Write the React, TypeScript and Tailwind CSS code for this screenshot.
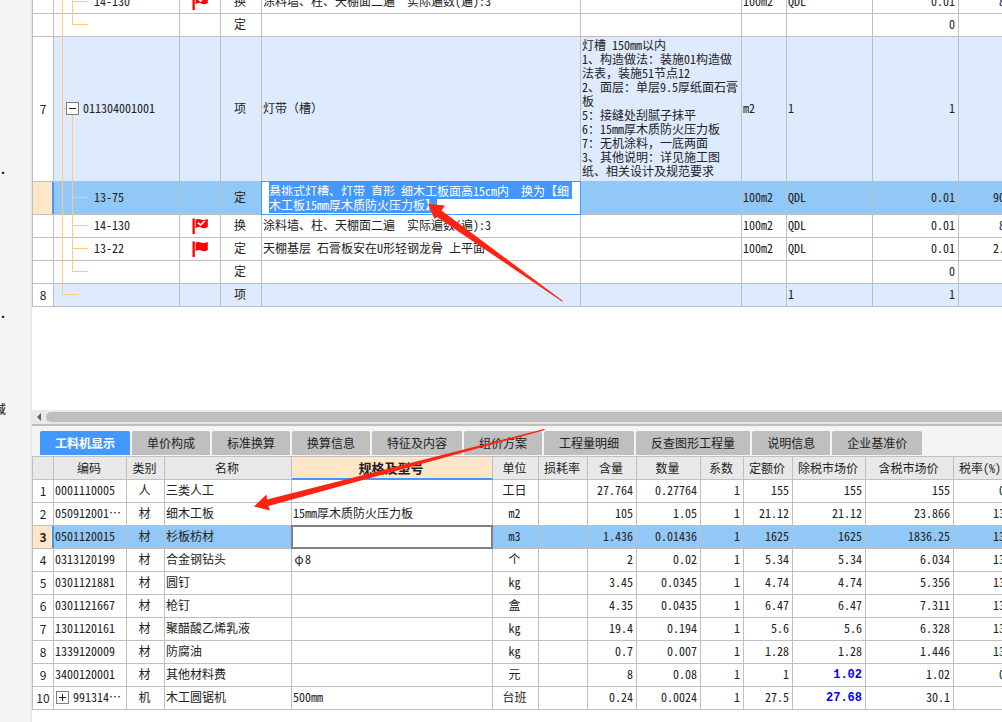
import { useEffect, useRef, type ReactNode } from 'react';

type Guide = 'branch' | 'last' | 'parent' | 'rootEnd';

interface Item {
  no?: string;
  code?: string;
  guide: Guide;
  flag?: 'check' | 'plain';
  kind: string;
  name?: string;
  feature?: string[];
  unit?: string;
  formula?: string;
  qty?: string;
  price?: string;
  group?: boolean;
  active?: boolean;
}

const items: Item[] = [
  { code: '14-130', guide: 'branch', flag: 'check', kind: '换', name: '涂料墙、柱、天棚面二遍  实际遍数(遍):3', unit: '100m2', formula: 'QDL', qty: '0.01', price: '8' },
  { guide: 'last', kind: '定', qty: '0' },
  {
    no: '7', code: '011304001001', guide: 'parent', kind: '项', name: '灯带（槽）', group: true,
    feature: [
      '灯槽 150mm以内', '1、构造做法：装施01构造做', '法表，装施51节点12', '2、面层：单层9.5厚纸面石膏', '板',
      '5：接缝处刮腻子抹平', '6：15mm厚木质防火压力板', '7：无机涂料，一底两面', '3、其他说明：详见施工图', '纸、相关设计及规范要求',
    ],
    unit: 'm2', formula: '1', qty: '1',
  },
  { code: '13-75', guide: 'branch', kind: '定', name: '悬挑式灯槽、灯带 直形 细木工板面高15cm内  换为【细木工板15mm厚木质防火压力板】', unit: '100m2', formula: 'QDL', qty: '0.01', price: '90', active: true },
  { code: '14-130', guide: 'branch', flag: 'check', kind: '换', name: '涂料墙、柱、天棚面二遍  实际遍数(遍):3', unit: '100m2', formula: 'QDL', qty: '0.01', price: '8' },
  { code: '13-22', guide: 'branch', flag: 'plain', kind: '定', name: '天棚基层 石膏板安在U形轻钢龙骨 上平面', unit: '100m2', formula: 'QDL', qty: '0.01', price: '2.' },
  { guide: 'last', kind: '定', qty: '0' },
  { no: '8', guide: 'rootEnd', kind: '项', formula: '1', qty: '1', group: true },
];

const tabs = ['工料机显示', '单价构成', '标准换算', '换算信息', '特征及内容', '组价方案', '工程量明细', '反查图形工程量', '说明信息', '企业基准价'];

const headers = ['', '编码', '类别', '名称', '规格及型号', '单位', '损耗率', '含量', '数量', '系数', '定额价', '除税市场价', '含税市场价', '税率(%)'];

const materials: string[][] = [
  ['0001110005', '人', '三类人工', '', '工日', '', '27.764', '0.27764', '1', '155', '155', '155', '0'],
  ['050912001⋯', '材', '细木工板', '15mm厚木质防火压力板', 'm2', '', '105', '1.05', '1', '21.12', '21.12', '23.866', '13'],
  ['0501120015', '材', '杉板枋材', '', 'm3', '', '1.436', '0.01436', '1', '1625', '1625', '1836.25', '13'],
  ['0313120199', '材', '合金钢钻头', 'φ8', '个', '', '2', '0.02', '1', '5.34', '5.34', '6.034', '13'],
  ['0301121881', '材', '圆钉', '', 'kg', '', '3.45', '0.0345', '1', '4.74', '4.74', '5.356', '13'],
  ['0301121667', '材', '枪钉', '', '盒', '', '4.35', '0.0435', '1', '6.47', '6.47', '7.311', '13'],
  ['1301120161', '材', '聚醋酸乙烯乳液', '', 'kg', '', '19.4', '0.194', '1', '5.6', '5.6', '6.328', '13'],
  ['1339120009', '材', '防腐油', '', 'kg', '', '0.7', '0.007', '1', '1.28', '1.28', '1.446', '13'],
  ['3400120001', '材', '其他材料费', '', '元', '', '8', '0.08', '1', '1', '1.02', '1.02', '0'],
  ['991314⋯', '机', '木工圆锯机', '500mm', '台班', '', '0.24', '0.0024', '1', '27.5', '27.68', '30.1', ''],
];

const LINE = 'absolute bg-[#ffc97f]';

/* Latin glyphs are half-width; Chinese punctuation and φ keep a full cell. */
function Label({ text = '' }: { text?: string }) {
  return (
    <>
      {text.split(/([，（）φ])/).map((part, i) => {
        if (i % 2 === 0) return part;
        return (
          <span key={i} className="inline-block w-3 text-center [font-feature-settings:normal]">
            {part}
          </span>
        );
      })}
    </>
  );
}

function TreeGuide({ guide }: { guide: Guide }) {
  if (guide === 'rootEnd') {
    return (
      <>
        <span className={`${LINE} left-2 top-0 h-[calc(50%-1px)] w-px`} />
        <span className={`${LINE} left-2 top-[calc(50%-1px)] h-px w-4`} />
      </>
    );
  }
  return (
    <>
      <span className={`${LINE} left-2 top-0 -bottom-px w-px`} />
      {guide === 'parent' && (
        <>
          <span className={`${LINE} left-2 top-[calc(50%-1px)] h-px w-1`} />
          <span className={`${LINE} left-[18px] top-1/2 -bottom-px w-px`} />
        </>
      )}
      {guide === 'branch' && <span className={`${LINE} left-[18px] top-0 -bottom-px w-px`} />}
      {guide === 'last' && <span className={`${LINE} left-[18px] top-0 h-[calc(50%-1px)] w-px`} />}
      {guide !== 'parent' && <span className={`${LINE} left-[18px] top-[calc(50%-1px)] h-px w-4`} />}
    </>
  );
}

function Toggle({ open, label }: { open: boolean; label: string }) {
  return (
    <button aria-label={label} className="relative flex size-[13px] shrink-0 items-center justify-center border border-[#808080] bg-white">
      <svg viewBox="0 0 7 7" className="size-[7px]" shapeRendering="crispEdges">
        <path d={open ? 'M0 3h7v1H0z' : 'M0 3h7v1H0zM3 0h1v7H3z'} fill="#222" />
      </svg>
    </button>
  );
}

function Flag({ check }: { check: boolean }) {
  return (
    <svg viewBox="0 0 16 16" className="mx-auto size-4">
      <path d="M0 .500h3V16H0z" fill="#ff8080" />
      <path d="M1 .500h1.600V16H1z" fill="#f00" />
      <path d="M3.600 1.500C5.500 .6 7.500 .8 9 1.500S13 2 15.800 1V9C13 10.600 11 10.400 9 9.600S5.500 9 3.600 10.200z" fill="#f00" />
      {check && <path d="M5.800 4.600 8.500 7 12.800 2.800" fill="none" stroke="#fff" strokeWidth="1.700" />}
    </svg>
  );
}

function NameEditor({ value }: { value: string }) {
  const ref = useRef<HTMLTextAreaElement>(null);
  useEffect(() => {
    ref.current?.focus({ preventScroll: true });
    ref.current?.select();
  }, []);
  return (
    <textarea
      ref={ref}
      aria-label="名称"
      defaultValue={value}
      spellCheck={false}
      className="absolute -inset-y-px -left-px -right-px block resize-none overflow-hidden border border-[#4398ff] bg-white pt-0.5 pr-0.5 pl-[7px] leading-[14px] outline-none selection:bg-[#4398ff] selection:text-white"
    />
  );
}

function Cell({ children, className = '' }: { children?: ReactNode; className?: string }) {
  return (
    <td className={`overflow-hidden border-r border-b border-[#bfbfbf] pt-0 pr-[3px] pb-0.5 pl-px whitespace-pre ${className}`}>{children}</td>
  );
}

function RowNumber({ children, active }: { children?: ReactNode; active?: boolean }) {
  return (
    <th
      scope="row"
      className={`relative border-r border-b border-[#bfbfbf] p-0 text-center [font-feature-settings:normal] ${active ? 'bg-[#ffe6c8] font-bold' : 'bg-white font-normal'}`}
    >
      {children}
      {active && <span className="absolute inset-y-0 -right-px w-0.5 bg-[#4398ff]" />}
    </th>
  );
}

function ItemTable() {
  return (
    <table className="-mt-[9px] w-full min-w-[977px] table-fixed border-separate border-spacing-0 border-l border-[#bfbfbf]">
      <colgroup>
        <col className="w-[21px]" />
        <col className="w-[126px]" />
        <col className="w-[41px]" />
        <col className="w-[41px]" />
        <col className="w-[319px]" />
        <col className="w-[161px]" />
        <col className="w-[45px]" />
        <col className="w-[86px]" />
        <col className="w-[86px]" />
        <col className="w-[50px]" />
      </colgroup>
      <tbody>
        {items.map((item, i) => (
          <tr
            key={i}
            className={`${item.feature ? 'h-[145px]' : item.active ? 'h-[33px]' : 'h-[23px]'} ${item.active ? 'bg-[#92c8f7]' : item.group ? 'bg-[#deeafe]' : 'bg-white'}`}
          >
            <RowNumber active={item.active}>{item.no}</RowNumber>
            <td className="relative border-r border-b border-[#bfbfbf] p-0 pb-0.5">
              <TreeGuide guide={item.guide} />
              <div className={`flex items-center gap-1 ${item.guide === 'parent' ? 'pl-3' : 'pl-10'}`}>
                {item.guide === 'parent' && <Toggle open label="折叠" />}
                {item.code}
              </div>
            </td>
            <td className="border-r border-b border-[#bfbfbf] p-0">{item.flag && <Flag check={item.flag === 'check'} />}</td>
            <Cell className="text-center">{item.kind}</Cell>
            {item.active ? (
              <td className="relative border-r border-b border-[#bfbfbf] p-0">
                <NameEditor value={item.name ?? ''} />
              </td>
            ) : (
              <Cell>
                <Label text={item.name} />
              </Cell>
            )}
            <Cell>
              {item.feature?.map((line) => (
                <div key={line}>
                  <Label text={line} />
                </div>
              ))}
            </Cell>
            <Cell>{item.unit}</Cell>
            <Cell>{item.formula}</Cell>
            <Cell className="text-right">{item.qty}</Cell>
            <Cell className="text-right">{item.price}</Cell>
          </tr>
        ))}
      </tbody>
    </table>
  );
}

function MaterialTable() {
  return (
    <table className="w-full min-w-[977px] table-fixed border-separate border-spacing-0 border-t border-l border-[#bfbfbf] bg-white">
      <colgroup>
        <col className="w-[21px]" />
        <col className="w-[73px]" />
        <col className="w-[38px]" />
        <col className="w-[127px]" />
        <col className="w-[201px]" />
        <col className="w-[46px]" />
        <col className="w-[49px]" />
        <col className="w-[49px]" />
        <col className="w-[64px]" />
        <col className="w-[43px]" />
        <col className="w-[49px]" />
        <col className="w-[73px]" />
        <col className="w-[88px]" />
        <col className="w-[55px]" />
      </colgroup>
      <thead>
        <tr className="h-[23px]">
          {headers.map((h, i) => (
            <th
              key={i}
              scope="col"
              className={`border-r border-r-[#bfbfbf] p-0 pr-0.5 whitespace-nowrap ${i === 4 ? 'border-b-2 border-b-[#4398ff] bg-[#ffe6c8] text-[13px] font-bold' : 'border-b border-b-[#bfbfbf] bg-[#e8e8e8] font-normal'}`}
            >
              {h}
            </th>
          ))}
        </tr>
      </thead>
      <tbody>
        {materials.map((row, r) => {
          const active = r === 2;
          return (
            <tr key={row[0]} className={`h-[23px] ${active ? 'bg-[#92c8f7]' : ''}`}>
              <RowNumber active={active}>{r + 1}</RowNumber>
              {row.map((value, c) => {
                if (active && c === 3) {
                  return (
                    <td key={c} className="relative border-r border-b border-[#bfbfbf] p-0">
                      <input aria-label="规格及型号" className="absolute -inset-y-px -left-px w-[calc(100%+2px)] border-2 border-[#808080] bg-white px-0.5 outline-none" />
                    </td>
                  );
                }
                if (c === 0 && r === 9) {
                  return (
                    <Cell key={c}>
                      <div className="flex items-center gap-1 pl-px">
                        <Toggle open={false} label="展开" />
                        {value}
                      </div>
                    </Cell>
                  );
                }
                const align = c === 1 || c === 4 ? 'text-center' : c > 4 ? 'text-right' : '';
                const changed = c === 10 && r > 7;
                return (
                  <Cell key={c} className={align}>
                    {changed ? (
                      <strong className="font-['Liberation_Mono',monospace] text-[#0000ff]">{value}</strong>
                    ) : (
                      <Label text={value} />
                    )}
                  </Cell>
                );
              })}
            </tr>
          );
        })}
      </tbody>
    </table>
  );
}

export default function App() {
  return (
    <div className="relative flex h-screen overflow-hidden bg-white font-['Noto_Sans_CJK_SC',sans-serif] text-[12px] leading-[14px] text-[#222] [font-feature-settings:'hwid']">
      <aside className="flex w-8 shrink-0 flex-col border-r-2 border-[#e8e8e8] bg-[#f4f4f4] pt-[162px] font-bold text-[#000050]">
        <span className="h-36">.</span>
        <span className="h-24">.</span>
        <span className="flex w-1.5 justify-end overflow-hidden font-normal text-[#111]">域</span>
      </aside>
      <main className="flex min-w-0 flex-1 flex-col">
        <section className="min-h-0 flex-1 overflow-hidden">
          <ItemTable />
        </section>
        <div className="flex h-3.5 shrink-0 items-center bg-[#e8e8e8]">
          <button aria-label="向左滚动" className="flex w-3.5 justify-center">
            <svg viewBox="0 0 4 8" className="h-2 w-1">
              <path d="M4 0v8L0 4z" fill="#606060" />
            </svg>
          </button>
          <div className="h-2.5 flex-1 rounded-l-full bg-[#bfbfbf]" />
        </div>
        <section className="h-[298px] shrink-0 overflow-hidden border-t-2 border-[#bfbfbf]">
          <div role="tablist" className="flex h-[30px] gap-0.5 bg-[#f4f4f4] pt-[5px] pb-px pl-2">
            {tabs.map((tab, i) => (
              <button
                key={tab}
                role="tab"
                aria-selected={i === 0}
                className={`shrink-0 rounded-t-xs px-[15px] whitespace-nowrap ${i === 0 ? 'bg-[#4398ff] font-bold text-white' : 'bg-[#bfbfbf]'}`}
              >
                {tab}
              </button>
            ))}
          </div>
          <MaterialTable />
        </section>
      </main>
      <svg viewBox="0 0 1002 722" className="pointer-events-none absolute top-0 left-0 h-[722px] w-[1002px]" aria-hidden="true">
        <g fill="#ff2314">
          <path d="M428 204 445 205.500 441.500 210.500 563 301 562 301.500 437 217 434.500 219z" />
          <path d="M254 506.500 266.500 494.500 267 499.500 544 429 545 430 268.500 506 270 510.500z" />
        </g>
      </svg>
    </div>
  );
}
